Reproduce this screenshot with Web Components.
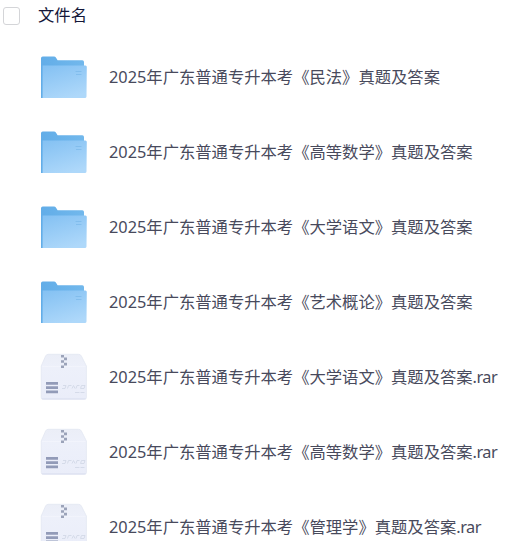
<!DOCTYPE html>
<html lang="zh-CN">
<head>
<meta charset="utf-8">
<title>文件列表</title>
<style>
html, body {
  margin: 0;
  height: 100%;
  overflow: hidden;
  background: #fff;
}
</style>
</head>
<body>
<file-list>
  <list-header slot="header">文件名</list-header>
  <file-row kind="folder">2025年广东普通专升本考《民法》真题及答案</file-row>
  <file-row kind="folder">2025年广东普通专升本考《高等数学》真题及答案</file-row>
  <file-row kind="folder">2025年广东普通专升本考《大学语文》真题及答案</file-row>
  <file-row kind="folder">2025年广东普通专升本考《艺术概论》真题及答案</file-row>
  <file-row kind="archive" ext=".rar">2025年广东普通专升本考《大学语文》真题及答案</file-row>
  <file-row kind="archive" ext=".rar">2025年广东普通专升本考《高等数学》真题及答案</file-row>
  <file-row kind="archive" ext=".rar">2025年广东普通专升本考《管理学》真题及答案</file-row>
</file-list>
<script>
const folderSvg = `
<svg width="48" height="48" viewBox="0 0 48 48">
  <defs>
    <linearGradient id="back" x1="0" y1="0" x2="1" y2="0">
      <stop offset="0" stop-color="#62ade8"/>
      <stop offset="1" stop-color="#72b8ec"/>
    </linearGradient>
    <linearGradient id="front" x1=".2" y1="0" x2=".6" y2="1">
      <stop offset="0" stop-color="#86c2f3"/>
      <stop offset="1" stop-color="#aed8fa"/>
    </linearGradient>
  </defs>
  <path d="M1 5.2Q1 3.5 2.7 3.5H14Q15.2 3.5 15.9 4.5L17.6 7.2H42.3Q44 7.2 44 8.9V45H1Z" fill="url(#back)"/>
  <path d="M2.6 12.5H45.4Q46.9 12.5 46.8 14L46.5 43.4Q46.4 45 44.8 45H2.6Z" fill="url(#front)"/>
  <path d="M35.5 18.5H41.5M36 21.5H41.5" fill="none" stroke="#74b4e8" stroke-width="1" opacity=".6"/>
</svg>`

const archiveSvg = `
<svg width="48" height="48" viewBox="0 0 48 48">
  <defs>
    <linearGradient id="box" x1="0" y1="0" x2="0" y2="1">
      <stop offset="0" stop-color="#ebeef7"/>
      <stop offset=".3" stop-color="#edf0fa"/>
      <stop offset="1" stop-color="#eaedf9"/>
    </linearGradient>
  </defs>
  <path d="M8.2 1.3H38.6Q40.5 1.3 41.4 3L46.4 13V44.5Q46.4 46.4 44.4 46.4H3.2Q1.2 46.4 1.2 44.5V13L5.6 3Q6.4 1.3 8.2 1.3Z" fill="url(#box)" stroke="#e1e5f0" stroke-width=".7"/>
  <path d="M2 13.5H45.6" stroke="#f3f5fc" stroke-width=".7"/>
  <path d="M2 45.8H45.6" stroke="#dce1f1"/>
  <g fill="#9ba3b9">
    <path d="M21 2h3v2.6h-3zM24 4.6h3v2.6h-3zM21 7.2h3v2.6h-3zM24 9.8h3v2.6h-3zM21 12.4h3v2.6h-3z"/>
    <path d="M6 29h12v2.7H6zM6 33.3h12v2.7H6zM6 37.6h12v2.7H6z" fill="#929bb8"/>
  </g>
  <path d="M22 35.5h3l1-3h-3M27.5 35.5l1-3h3M32 35.5l1.5-3 1.5 3M36 35.5l1-3h2.5M40.5 35.5l1-3H45l-1 3zM35 39.5h4.5M40.5 39.5h4" fill="none" stroke="#d3d8e6" stroke-width=".9"/>
</svg>`

class FileList extends HTMLElement {
  constructor() {
    super()
    this.attachShadow({mode: 'open'}).innerHTML = `
<style>
:host {
  display: flex;
  flex-direction: column;
  font-family: "Noto Sans", "Noto Sans CJK SC", sans-serif;
  font-size: 16.32px;
  color: #484a5c;
}
.rows {
  display: flex;
  flex-direction: column;
  padding-top: 9px;
}
</style>
<slot name="header"></slot>
<div class="rows"><slot></slot></div>`
  }
}

class ListHeader extends HTMLElement {
  constructor() {
    super()
    this.attachShadow({mode: 'open'}).innerHTML = `
<style>
:host {
  display: flex;
  align-items: center;
  gap: 18px;
  height: 31px;
  padding-left: 3px;
  color: #141739;
}
.check {
  box-sizing: border-box;
  width: 17px;
  height: 18px;
  border: 1px solid #d4d5d8;
  border-radius: 3px;
}
.label { padding-bottom: 4px; }
</style>
<span class="check"></span>
<span class="label"><slot></slot></span>`
  }
}

class FileIcon extends HTMLElement {
  connectedCallback() {
    const svg = this.getAttribute('kind') == 'folder' ? folderSvg : archiveSvg
    this.attachShadow({mode: 'open'}).innerHTML = `
<style>
:host { display: block; flex: none; width: 48px; height: 48px; }
svg { display: block; }
</style>${svg}`
  }
}

class FileRow extends HTMLElement {
  connectedCallback() {
    const ext = this.getAttribute('ext') || ''
    this.attachShadow({mode: 'open'}).innerHTML = `
<style>
:host {
  box-sizing: border-box;
  display: flex;
  align-items: center;
  gap: 21px;
  height: 75px;
  padding: 0 0 1px 40px;
  white-space: nowrap;
}
.name { padding-bottom: 3px; }
.ext { letter-spacing: -0.5px; }
</style>
<file-icon kind="${this.getAttribute('kind')}"></file-icon>
<span class="name"><slot></slot><span class="ext">${ext}</span></span>`
  }
}

customElements.define('file-list', FileList)
customElements.define('list-header', ListHeader)
customElements.define('file-icon', FileIcon)
customElements.define('file-row', FileRow)
</script>
</body>
</html>
